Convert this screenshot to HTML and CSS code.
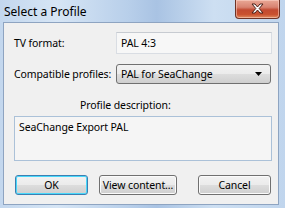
FILE: index.html
```html
<!DOCTYPE html>
<html>
<head>
<meta charset="utf-8">
<link rel="stylesheet" href="styles.css">
</head>
<body>
<div class="window">
  <div class="titlebar">
    <span class="title">Select a Profile</span>
    <div class="close">
      <svg width="45" height="19" viewBox="0 0 45 19">
        <path d="M17 5 L20 5 L22.5 8 L25 5 L28 5 L24.2 9.5 L28 14 L25 14 L22.5 11 L20 14 L17 14 L20.8 9.5 Z" fill="#ffffff" stroke="#4a2018" stroke-width="1" stroke-linejoin="round"/>
      </svg>
    </div>
  </div>
  <div class="client">
    <div class="row row-first">
      <span class="label">TV format:</span>
      <div class="field">PAL 4:3</div>
    </div>
    <div class="row row-second">
      <span class="label">Compatible profiles:</span>
      <div class="combo">
        <span>PAL for SeaChange</span>
        <svg class="arrow" width="8" height="5" viewBox="0 0 8 5"><path d="M0 0 H7 L3.5 4 Z" fill="#000"/></svg>
      </div>
    </div>
    <div class="desc-label">Profile description:</div>
    <div class="desc">SeaChange Export PAL</div>
    <div class="buttons">
      <div class="btn btn-default">OK</div>
      <div class="btn btn-view">View content...</div>
      <div class="btn btn-cancel">Cancel</div>
    </div>
  </div>
</div>
</body>
</html>
```
FILE: styles.css
```css
html, body {
  margin: 0;
  padding: 0;
}
body {
  width: 285px;
  height: 208px;
  overflow: hidden;
  font-family: "Noto Sans", "Open Sans", sans-serif;
  font-size: 10.5px;
  letter-spacing: -0.1px;
  color: #000;
  white-space: nowrap;
}
.window {
  width: 285px;
  height: 208px;
  box-sizing: border-box;
  background: linear-gradient(90deg, #c3d7ee 0%, #d6e5f5 20%, #b8cfea 45%, #a9c3e3 55%, #cddff2 75%, #c0d5ed 100%);
  display: flex;
  flex-direction: column;
  padding: 0 6px 3px 3px;
}
.titlebar {
  height: 22px;
  display: flex;
  justify-content: space-between;
  align-items: flex-start;
}
.title {
  font-size: 12px;
  letter-spacing: 0;
  line-height: 14px;
  padding-top: 5px;
  padding-left: 1px;
}
.close {
  width: 45px;
  height: 19px;
  margin-right: -1px;
  box-sizing: border-box;
  border: 1px solid #6e3326;
  border-top: none;
  border-radius: 0 0 4px 4px;
  background: linear-gradient(180deg, #e9a896 0%, #d88371 40%, #c24a31 55%, #c9512f 80%, #e08c60 100%);
  box-shadow: inset 0 0 0 1px rgba(255,220,210,0.5);
}
.close svg {
  display: block;
  margin: -1px 0 0 -1px;
}
.client {
  flex: 1;
  background: #f0f0f0;
  border: 1px solid #8ea4c1;
  display: flex;
  flex-direction: column;
  padding: 0 5px 0 10px;
}
.row {
  display: flex;
  align-items: center;
}
.row-first {
  margin-top: 9px;
  height: 22px;
}
.row-second {
  margin-top: 10px;
  height: 20px;
}
.label {
  width: 102px;
  flex: none;
}
.field {
  width: 156px;
  height: 22px;
  box-sizing: border-box;
  border: 1px solid #d9dde3;
  border-top-color: #c7cbd1;
  background: #f7f7f7;
  padding: 0 0 0 4px;
  line-height: 20px;
}
.combo {
  width: 155px;
  height: 20px;
  box-sizing: border-box;
  border: 1px solid #707070;
  border-radius: 3px;
  background: linear-gradient(180deg, #f2f2f2 0%, #ebebeb 50%, #dddddd 51%, #cfcfcf 100%);
  display: flex;
  align-items: center;
  justify-content: space-between;
  padding: 0 7px 0 4px;
  line-height: 18px;
}
.arrow {
  display: block;
}
.desc-label {
  margin-top: 13px;
  padding-left: 66px;
  line-height: 16px;
}
.desc {
  margin-top: 3px;
  width: 258px;
  height: 45px;
  box-sizing: border-box;
  border: 1px solid #abc1d8;
  background: #f5f5f5;
  padding: 2px 4px;
  line-height: 16px;
}
.buttons {
  margin-top: 14px;
  display: flex;
  padding-left: 1px;
}
.btn {
  height: 20px;
  box-sizing: border-box;
  border: 1px solid #707070;
  border-radius: 3px;
  background: linear-gradient(180deg, #f2f2f2 0%, #ebebeb 50%, #dddddd 51%, #cfcfcf 100%);
  box-shadow: inset 0 0 0 1px #fbfbfb;
  display: flex;
  align-items: center;
  justify-content: center;
  line-height: 16px;
}
.btn-default {
  width: 73px;
  border-color: #3c7fb1;
  box-shadow: inset 0 0 0 1px #48d8fb;
}
.btn-view {
  width: 78px;
  margin-left: 11px;
}
.btn-cancel {
  width: 73px;
  margin-left: 21px;
}
```
